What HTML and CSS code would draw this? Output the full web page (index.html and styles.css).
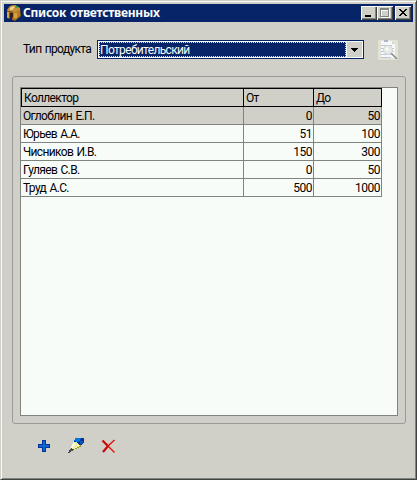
FILE: index.html
```html
<!DOCTYPE html>
<html lang="ru">
<head>
<meta charset="utf-8">
<title>Список ответственных</title>
<link rel="stylesheet" href="styles.css">
</head>
<body>
<main class="window">
  <header class="titlebar">
    <svg class="app-icon" width="16" height="16" viewBox="0 0 16 16">
      <path fill="#8c5c18" d="M1 5 4 1 9 0 14 3 15 11 9 16 6 15 6 9 4 9 4 14 1 13Z"/>
      <path fill="#c89038" d="M1 5 4 1 9 0 14 3 14 6 8 8 6 6 2 6Z"/>
      <path fill="#f0d498" d="M4 3 7 1 9 2 6 5 4 5Z"/>
      <path fill="#b87c20" d="M7 8 14 5 14 11 9 15 7 14Z"/>
      <path fill="#d8a040" d="M8 8h3v5H8zM1 7h2v6H1z"/>
      <path fill="#302018" d="M4 8h3v4H4z"/>
      <path fill="#082468" d="M4 12h2v4H4z"/>
      <path fill="#20b038" d="M9 2h1V1h2v2H9z"/>
    </svg>
    <h1 class="title">Список ответственных</h1>
    <div class="controls">
      <button class="ctl" aria-label="Свернуть"><svg width="16" height="14" shape-rendering="crispEdges"><path d="M4 9h6v2H4z"/></svg></button>
      <button class="ctl" aria-label="Развернуть"><svg width="16" height="14" shape-rendering="crispEdges"><path fill="#f8fcf8" d="M4 3h9v9H4z"/><path fill="#808480" d="M3 2h9v9H3z"/><path fill="#f8fcf8" d="M4 4h7v6H4z"/><path fill="#d0d0c8" d="M5 5h6v5H5z"/></svg></button>
      <button class="ctl ctl-close" aria-label="Закрыть"><svg width="16" height="14" shape-rendering="crispEdges"><path d="M4 3h2v1h1v1h2V4h1V3h2v1h-1v1h-1v1H9v1h1v1h1v1h1v1h-2V9H9V8H7v1H6v1H4V9h1V8h1V7h1V6H6V5H5V4H4z"/></svg></button>
    </div>
  </header>

  <section class="filter">
    <label class="filter-label">Тип продукта</label>
    <div class="combo">
      <div class="combo-value">Потребительский</div>
      <div class="combo-arrow"><svg width="7" height="4" shape-rendering="crispEdges"><path d="M0 0h7v1H6v1H5v1H4v1H3V3H2V2H1V1H0z"/></svg></div>
    </div>
    <svg class="preview" width="20" height="20" viewBox="0 0 20 20">
      <rect width="20" height="20" rx="1" fill="#e2e3d3"/>
      <path fill="#f6f8fa" d="M3 1h11l3 3v14H3z"/>
      <path fill="#b0b6d0" d="M6 0h4v2H6z"/>
      <path fill="#d3d6d0" d="M14 1v3h3z"/>
      <path stroke="#bcc4dc" d="M3 5.500h11M3 8.500h13M3 11.500h13M3 14.500h12M3 17.500h10"/>
      <path stroke="#85878a" stroke-width="1.500" d="m13 13 6 6"/>
      <circle cx="10" cy="10" r="4.500" fill="#e6e9e6" stroke="#d2d5d2"/>
      <circle cx="9" cy="9" r="2" fill="#f6f8f6"/>
    </svg>
  </section>

  <section class="group">
    <div class="list">
      <div class="grid">
        <div class="row head"><span class="cell">Коллектор</span><span class="cell">От</span><span class="cell">До</span></div>
        <div class="row selected"><span class="cell">Оглоблин Е.П.</span><span class="cell num">0</span><span class="cell num">50</span></div>
        <div class="row"><span class="cell">Юрьев А.А.</span><span class="cell num">51</span><span class="cell num">100</span></div>
        <div class="row"><span class="cell">Чисников И.В.</span><span class="cell num">150</span><span class="cell num">300</span></div>
        <div class="row"><span class="cell">Гуляев С.В.</span><span class="cell num">0</span><span class="cell num">50</span></div>
        <div class="row"><span class="cell">Труд А.С.</span><span class="cell num">500</span><span class="cell num">1000</span></div>
      </div>
    </div>
  </section>

  <footer class="tools">
    <svg width="16" height="16" shape-rendering="crispEdges"><path fill="#08309c" d="M6 2h4v4h4v4h-4v4H6v-4H2V6h4z"/><path fill="#0868d0" d="M7 3h2v4h4v2H9v4H7V9H3V7h4z"/></svg>
    <svg width="16" height="16" shape-rendering="crispEdges">
      <path fill="#f0f0a0" d="M5 4h4l4 4v1h-2v1H9v1H7v1H4l-1-2V8h1V6h1z"/>
      <path fill="#fcfcdc" d="M5 5h2v3H5v2H3V8h1V6h1z"/>
      <path fill="#989840" d="M12 7h1v2h-2v1H9v1H7v-1h2V9h2V8h1z"/>
      <path fill="#08309c" d="M7 0h9v5h-1v1h-1v1h-3V6h-1V5H9V4H6V2h1z"/>
      <path fill="#0078e0" d="M7 0h6v1h-1v2h-1v1H8V3H6V2h1z"/>
      <path fill="#0858b8" d="M12 3h3v2h-1v1h-2z"/>
      <path fill="#484848" d="M3 10h1v1h2v1H5v1H3v1H2v1H0v-1h1v-2h1v-1h1z"/>
    </svg>
    <svg width="16" height="16" viewBox="0 0 16 16"><path fill="none" stroke="#c80808" stroke-width="2.200" d="M2.500 2.500 8 8M8.500 7.500 3 14"/><path fill="none" stroke="#e01010" stroke-width="1.400" d="M7 7l7.500 7.500M7.500 8.500 14.500 2"/></svg>
  </footer>
</main>
</body>
</html>
```
FILE: styles.css
```css
* { box-sizing: border-box; }
body { margin: 0; background: #d0d0c8; font: 12px/14px Roboto, "Liberation Sans", sans-serif; color: #000; letter-spacing: -0.65px; word-spacing: 1px; }
svg { display: block; flex: none; }
.window {
  width: 417px; height: 480px; padding: 3px;
  border: 1px solid; border-color: #d0d0c8 #404440 #404440 #d0d0c8;
  box-shadow: inset 1px 1px #f8fcf8, inset -1px -1px #808480;
  display: flex; flex-direction: column;
  background: #d0d0c8;
}
.titlebar { height: 18px; background: #082468; display: flex; align-items: center; padding: 0 2px; }
.title { margin: 0 0 0 1px; font: bold 12px/18px "Noto Sans", sans-serif; color: #f8fcf8; letter-spacing: -0.25px; white-space: nowrap; }
.controls { margin-left: auto; display: flex; }
.ctl {
  width: 16px; height: 14px; padding: 0; border: 0; background: #d0d0c8;
  box-shadow: inset 1px 1px #f8fcf8, inset -1px -1px #404440, inset -2px -2px #808480;
}
.ctl-close { margin-left: 2px; }
.filter { height: 20px; margin: 17px 0 0 19px; display: flex; align-items: flex-start; }
.filter-label { width: 74px; padding-top: 3px; white-space: nowrap; }
.combo { width: 267px; height: 19px; margin-top: 1px; border: 1px solid #082468; background: #f8fcf8; display: flex; padding: 1px; }
.combo-value { flex: 1; background: #082468; border: 1px dotted #f8d890; color: #f8fcf8; line-height: 15px; white-space: nowrap; }
.combo-arrow { width: 15px; margin-left: 1px; background: #d0d0c8; display: flex; align-items: center; justify-content: center; }
.preview { margin: 1px 0 0 14px; }
.group { width: 394px; height: 348px; margin: 17px 0 0 8px; border: 1px solid #989c98; border-radius: 3px; padding: 10px 7px; }
.list { width: 378px; height: 329px; border: 1px solid #808480; background: #f8fcf8; }
.grid { width: 361px; }
.row { display: grid; grid-template-columns: 223px 70px 68px; height: 18px; }
.cell { border: solid #808480; border-width: 0 1px 1px 0; padding: 2px 2px 0; line-height: 14px; white-space: nowrap; }
.num { text-align: right; padding-right: 1px; letter-spacing: -0.5px; }
.head { height: 19px; }
.head .cell { border-color: #000; border-top-width: 1px; }
.head .cell:first-child { border-left-width: 1px; }
.head, .selected { background: #d0d0c8; }
.tools { display: flex; gap: 16px; margin: 14px 0 0 32px; }
```
